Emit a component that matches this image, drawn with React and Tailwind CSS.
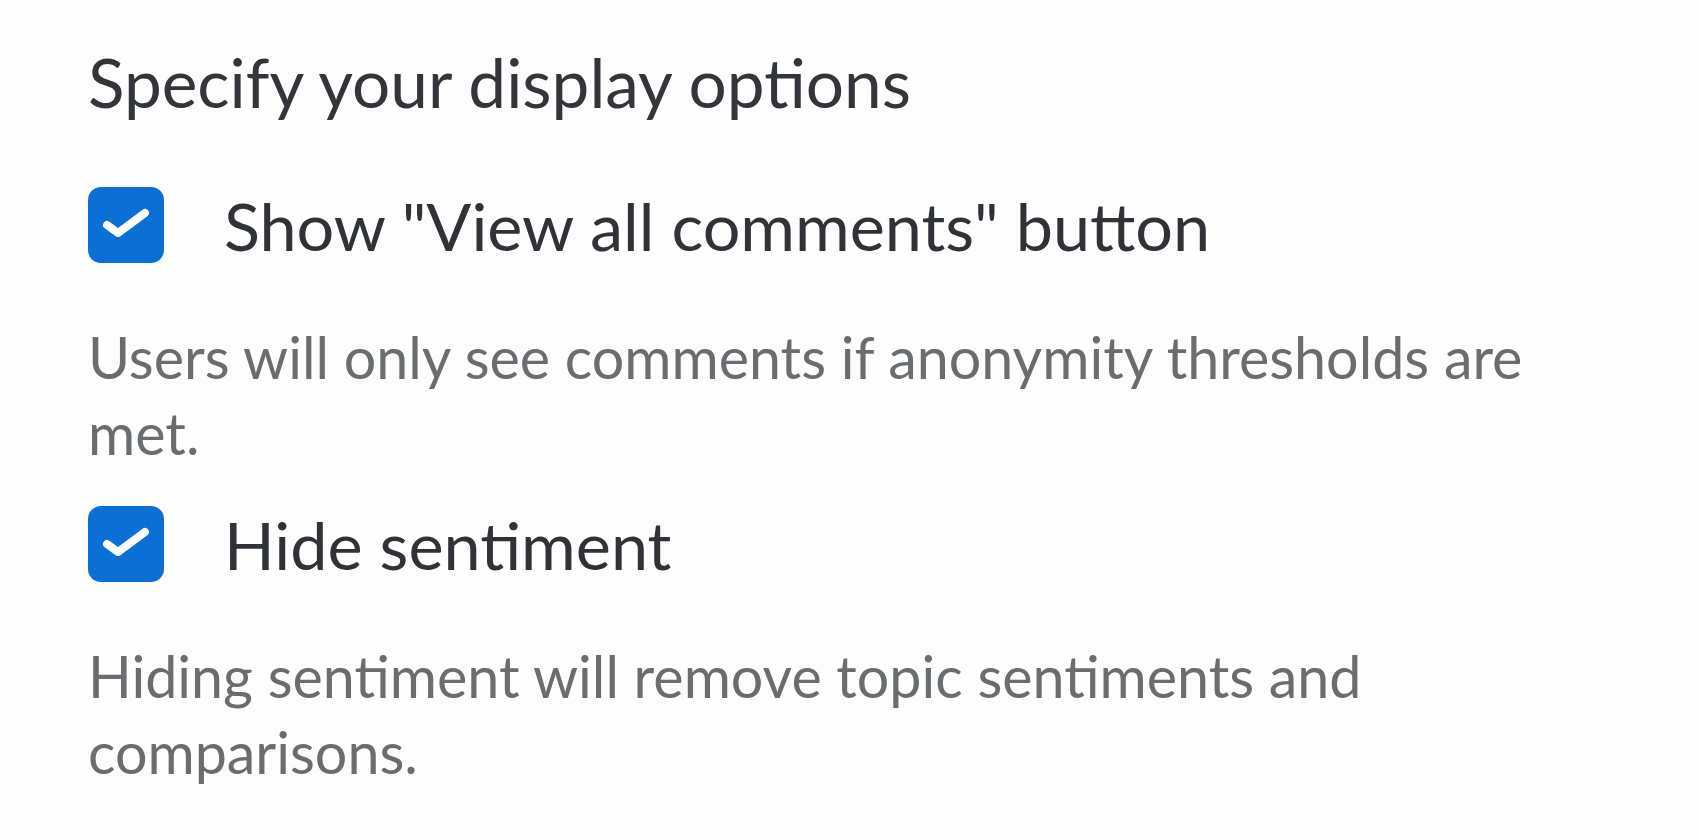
import { useState } from "react";

function Check({ checked, onToggle }) {
  return (
    <button
      onClick={onToggle}
      className={`w-[76px] h-[76px] shrink-0 rounded-[13px] flex items-center justify-center ${
        checked ? "bg-[#0b6fd6]" : "bg-white border-2 border-[#89919a]"
      }`}
    >
      {checked && (
        <svg width="76" height="76" viewBox="0 0 76 76" fill="none">
          <path
            d="M19 38 L30 46 L57 26"
            stroke="white"
            strokeWidth="8"
            strokeLinecap="round"
            strokeLinejoin="round"
          />
        </svg>
      )}
    </button>
  );
}

export default function App() {
  const [showAll, setShowAll] = useState(true);
  const [hideSentiment, setHideSentiment] = useState(true);

  return (
    <div className="min-h-screen w-full bg-[#fdfdfd] font-['Lato',sans-serif] pl-[88px] pt-[42px]">
      {/* Heading */}
      <h2 className="text-[67.5px] leading-[80px] text-[#32363a]">
        Specify your display options
      </h2>

      {/* Option 1 */}
      <div className="flex items-center gap-[60px] mt-[63px]">
        <Check checked={showAll} onToggle={() => setShowAll(!showAll)} />
        <span className="text-[66.5px] leading-[80px] text-[#2f3236]">
          Show "View all comments" button
        </span>
      </div>
      <p className="mt-[54px] max-w-[1560px] text-[57.4px] leading-[76px] text-[#6a6d70]">
        Users will only see comments if anonymity thresholds are met.
      </p>

      {/* Option 2 */}
      <div className="flex items-center gap-[60px] mt-[33px]">
        <Check
          checked={hideSentiment}
          onToggle={() => setHideSentiment(!hideSentiment)}
        />
        <span className="text-[66.5px] leading-[80px] text-[#2f3236]">
          Hide sentiment
        </span>
      </div>
      <p className="mt-[54px] max-w-[1560px] text-[57.4px] leading-[76px] text-[#6a6d70]">
        Hiding sentiment will remove topic sentiments and comparisons.
      </p>
    </div>
  );
}
